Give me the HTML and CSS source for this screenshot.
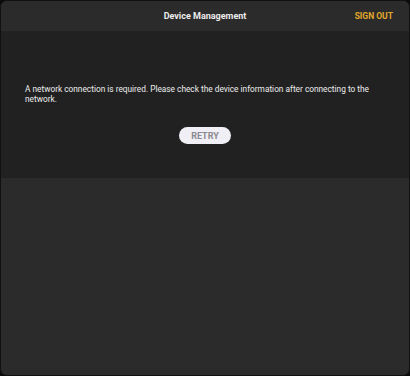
FILE: index.html
```html
<!DOCTYPE html>
<html lang="en">
<head>
<meta charset="UTF-8" />
<meta name="viewport" content="width=device-width, initial-scale=1" />
<title>Device Management</title>
<link rel="stylesheet" href="styles.css">
</head>
<body>
  <div class="screen">
    <header class="topbar">
      <span class="spacer"></span>
      <h1>Device Management</h1>
      <button class="sign-out" type="button">SIGN OUT</button>
    </header>

    <section class="notice">
      <p>A network connection is required. Please check the device information after connecting to the network.</p>
      <button class="retry" type="button">RETRY</button>
    </section>
  </div>
</body>
</html>
```

FILE: styles.css
```css
/* Reset & base */
* {
  box-sizing: border-box;
}
html, body {
  margin: 0;
  padding: 0;
  background: #0c0c0c;
}
body {
  width: 410px;
  height: 376px;
  font-family: Roboto, 'Noto Sans', sans-serif;
  color: #f2f2f2;
}

.screen {
  width: 410px;
  height: 376px;
  border: 1px solid #111;
  border-radius: 7px;
  overflow: hidden;
  background: #2b2b2b;
  display: flex;
  flex-direction: column;
}

/* Top bar */
.topbar {
  height: 30px;
  background: #2b2b2b;
  display: grid;
  grid-template-columns: 1fr auto 1fr;
  align-items: center;
  padding: 0 16px 0 16px;
}
.topbar h1 {
  margin: 0;
  font-size: 9px;
  font-weight: 700;
  color: #ececec;
}
.sign-out {
  justify-self: end;
  background: none;
  border: 0;
  padding: 0;
  font-family: inherit;
  font-size: 8.5px;
  font-weight: 700;
  color: #e3a92c;
}

/* Notice band */
.notice {
  background: #212121;
  height: 147px;
  padding: 53px 24px 0;
  display: flex;
  flex-direction: column;
  align-items: center;
}
.notice p {
  margin: 0;
  align-self: stretch;
  font-size: 8.3px;
  line-height: 10px;
  color: #ededed;
}
.retry {
  margin-top: 23px;
  width: 52px;
  height: 17px;
  border: 0;
  border-radius: 9px;
  background: #f1eff6;
  color: #8a8a8e;
  font-family: inherit;
  font-size: 9px;
  font-weight: 700;
  padding: 0;
}
```
